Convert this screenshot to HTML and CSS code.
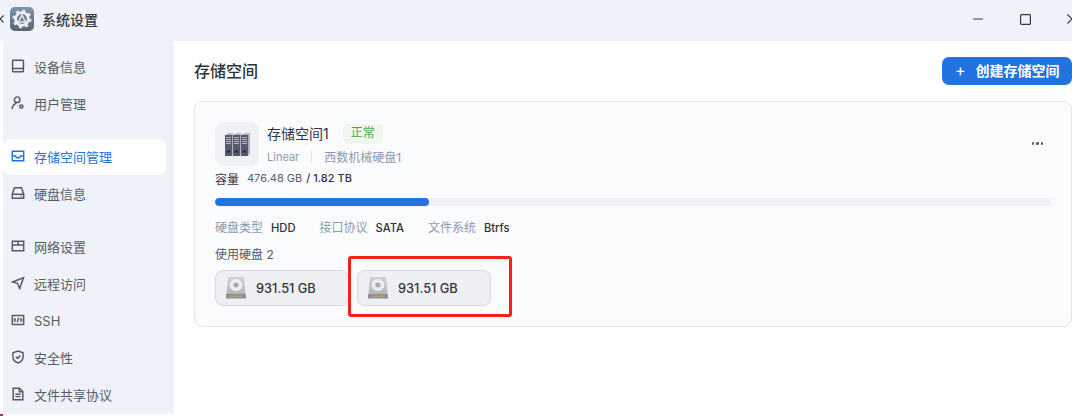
FILE: index.html
```html
<!DOCTYPE html>
<html lang="zh-CN">
<head>
<meta charset="utf-8">
<title>系统设置</title>
<link rel="stylesheet" href="styles.css">
</head>
<body>
<div class="app">
  <header class="titlebar">
    <svg class="back" width="4" height="10" viewBox="0 0 4 10"><path d="M3.500 1.500 0 5 3.500 8.500" fill="none" stroke="#333a45" stroke-width="1.200"/></svg>
    <svg class="app-icon" width="24" height="24" viewBox="0 0 24 24">
      <defs><linearGradient id="ag" x1="0" y1="0" x2="0" y2="1"><stop offset="0" stop-color="#7f93ab"/><stop offset="1" stop-color="#5a6473"/></linearGradient></defs>
      <rect width="24" height="24" rx="5" fill="url(#ag)"/>
      <circle cx="12" cy="12" r="6.400" fill="#6f7f94" stroke="#eceff3" stroke-width="2.800"/>
      <circle cx="12" cy="12" r="8.400" fill="none" stroke="#eceff3" stroke-width="2.200" stroke-dasharray="3 3.600"/>
      <path d="M12 8 15.500 15H8.500Z" fill="none" stroke="#e4e8ed" stroke-width="1.500"/>
    </svg>
    <span class="app-title">系统设置</span>
    <div class="win-controls">
      <svg class="win-min" width="10" height="2" viewBox="0 0 10 2"><rect width="10" height="1.400" y=".3" fill="#6c727c"/></svg>
      <svg width="11" height="11" viewBox="0 0 11 11"><rect x=".6" y=".6" width="9.800" height="9.800" rx="1" fill="none" stroke="#33383f" stroke-width="1.200"/></svg>
      <svg width="10" height="10" viewBox="0 0 10 10"><path d="M.5.500 9.500 9.500M9.500.500.500 9.500" stroke="#33383f" stroke-width="1.200"/></svg>
    </div>
  </header>
  <div class="body-row">
    <div class="edge"></div>
    <nav class="sidebar">
      <a class="nav-item">
        <svg class="nav-icon" viewBox="0 0 16 16"><path d="M2.500 1.500h11a.7.7 0 0 1 .7.7v11.600a.7.7 0 0 1-.7.7h-11a.7.7 0 0 1-.7-.7V2.200a.7.7 0 0 1 .7-.7ZM1.800 10.800h12.400"/></svg>
        <span>设备信息</span>
      </a>
      <a class="nav-item">
        <svg class="nav-icon" viewBox="0 0 16 16"><circle cx="7" cy="4.200" r="3.200"/><path d="M1.200 15.200c.2-3.500 2-6 5-7"/><circle cx="11.800" cy="12" r="1.800" stroke-width="1.800"/></svg>
        <span>用户管理</span>
      </a>
      <a class="nav-item active group-start">
        <svg class="nav-icon" viewBox="0 0 16 16"><path d="M1.500 2.500h13v11h-13ZM1.500 8h3.800l1 2h3.400l1-2h3.800"/></svg>
        <span>存储空间管理</span>
      </a>
      <a class="nav-item">
        <svg class="nav-icon" viewBox="0 0 16 16"><path d="M4 2h8l2.500 7v5H1.500V9ZM1.500 9.300h13M11 11.700h1.200"/></svg>
        <span>硬盘信息</span>
      </a>
      <a class="nav-item group-start">
        <svg class="nav-icon" viewBox="0 0 16 16"><path d="M1.500 2.500h13v11h-13ZM1.500 6.800h13M8 2.500v4.300"/></svg>
        <span>网络设置</span>
      </a>
      <a class="nav-item">
        <svg class="nav-icon" viewBox="0 0 16 16"><path d="M14.300 2 1.500 6.800l6 1.600 2.400 6Z"/></svg>
        <span>远程访问</span>
      </a>
      <a class="nav-item">
        <svg class="nav-icon" viewBox="0 0 16 16"><path d="M1.500 2.800h13v10.400h-13ZM5.200 6 3.700 8l1.500 2M10.800 6l1.500 2-1.500 2M8.800 5.500l-1.600 5"/></svg>
        <span class="latin">SSH</span>
      </a>
      <a class="nav-item">
        <svg class="nav-icon" viewBox="0 0 16 16"><path d="M8 1.200 13.800 3.200V8c0 3.300-2.500 5.500-5.800 6.800C4.700 13.500 2.200 11.300 2.200 8V3.200ZM5.500 7.800 7.400 9.600 10.600 6.400"/></svg>
        <span>安全性</span>
      </a>
      <a class="nav-item">
        <svg class="nav-icon" viewBox="0 0 16 16"><path d="M2.500 1.500h7.300l3.700 3.700v9.300h-11ZM9.500 1.500v4h4M5 8.300h6M5 11h6"/></svg>
        <span>文件共享协议</span>
      </a>
    </nav>
    <main class="main">
      <div class="page-head">
        <h1 class="page-title">存储空间</h1>
        <button class="primary-btn"><span class="plus">+</span>创建存储空间</button>
      </div>
      <section class="card">
        <div class="card-head">
          <div class="pool-icon">
            <svg width="28" height="28" viewBox="0 0 28 28">
              <path d="M3 5 5 3h5.500L9 5Z" fill="#b4b8c4"/><path d="M9 5l1.500-2v20L9 26Z" fill="#aeb2c0"/><rect x="2" y="5" width="7" height="21" fill="#545a6c"/>
              <path d="M3 7.500h5M3 9.500h5M3 11.500h5M3 13.500h5" stroke="#c9ccd6" stroke-width=".8"/><circle cx="5.500" cy="21.500" r="1.300" fill="#20232c"/>
              <path d="M11 5l2-2h5.500L17 5Z" fill="#b4b8c4"/><path d="M17 5l1.500-2v20L17 26Z" fill="#aeb2c0"/><rect x="10" y="5" width="7" height="21" fill="#545a6c"/>
              <path d="M11 7.500h5M11 9.500h5M11 11.500h5M11 13.500h5" stroke="#c9ccd6" stroke-width=".8"/><circle cx="13.500" cy="21.500" r="1.300" fill="#20232c"/>
              <path d="M19 5l2-2h6L25 5Z" fill="#b4b8c4"/><path d="M25 5l2-2v20L25 26Z" fill="#aeb2c0"/><rect x="18" y="5" width="7" height="21" fill="#545a6c"/>
              <path d="M19 7.500h5M19 9.500h5M19 11.500h5M19 13.500h5" stroke="#c9ccd6" stroke-width=".8"/><circle cx="21.500" cy="21.500" r="1.300" fill="#20232c"/>
            </svg>
          </div>
          <div class="pool-info">
            <div class="pool-name-row">
              <span class="pool-name">存储空间1</span>
              <span class="status">正常</span>
            </div>
            <div class="pool-sub"><span class="raid">Linear</span><i class="sub-sep"></i><span>西数机械硬盘1</span></div>
          </div>
          <div class="more"><i></i><i></i><i></i></div>
        </div>
        <div class="capacity"><span class="cap-label">容量</span><span class="cap-used">476.48 GB</span><span class="cap-total">/ 1.82 TB</span></div>
        <div class="progress"><div class="progress-fill" style="width:25.600%"></div></div>
        <div class="specs">
          <div class="spec"><span class="spec-key">硬盘类型</span><span class="spec-val">HDD</span></div>
          <div class="spec"><span class="spec-key">接口协议</span><span class="spec-val">SATA</span></div>
          <div class="spec"><span class="spec-key">文件系统</span><span class="spec-val">Btrfs</span></div>
        </div>
        <div class="disks-label">使用硬盘 2</div>
        <div class="disks">
          <div class="disk">
            <svg class="disk-icon" width="22" height="24" viewBox="0 0 22 24"><defs><linearGradient id="dg" x1="0" y1="0" x2="0" y2="1"><stop offset="0" stop-color="#d2d3d8"/><stop offset="1" stop-color="#b4b6bd"/></linearGradient></defs><path d="M3 1h16l1.500 17h-19Z" fill="url(#dg)"/><ellipse cx="11" cy="9" rx="6.500" ry="6" fill="#eceded"/><ellipse cx="11" cy="9" rx="2.600" ry="2.400" fill="#a6a9b0"/><path d="M1 18h20v4.500H1Z" fill="#8d9098"/><path d="M5 20.500h12" stroke="#c9a94e" stroke-width="1.400" stroke-dasharray="1.500 .8"/></svg>
            <span>931.51 GB</span>
          </div>
          <div class="disk">
            <svg class="disk-icon" width="22" height="24" viewBox="0 0 22 24"><path d="M3 1h16l1.500 17h-19Z" fill="url(#dg)"/><ellipse cx="11" cy="9" rx="6.500" ry="6" fill="#eceded"/><ellipse cx="11" cy="9" rx="2.600" ry="2.400" fill="#a6a9b0"/><path d="M1 18h20v4.500H1Z" fill="#8d9098"/><path d="M5 20.500h12" stroke="#c9a94e" stroke-width="1.400" stroke-dasharray="1.500 .8"/></svg>
            <span>931.51 GB</span>
            <div class="highlight"></div>
          </div>
        </div>
      </section>
    </main>
  </div>
</div>
</body>
</html>
```
FILE: styles.css
```css
* { box-sizing: border-box; }
html, body { margin: 0; height: 100%; }
body {
  width: 1072px;
  height: 416px;
  overflow: hidden;
  background: #fff;
  font-family: "Inter", "Noto Sans CJK SC", sans-serif;
  color: #2b2f36;
}
.app { display: flex; flex-direction: column; height: 416px; }
.titlebar {
  height: 41px;
  flex: none;
  display: flex;
  align-items: center;
  background: #eff3f9;
}
.back { margin: -3px 6px 0 0; flex: none; }
.app-icon { flex: none; margin-top: -3px; }
.app-title {
  margin: -4px 0 0 8px;
  font-size: 14px;
  font-weight: 500;
  color: #33373e;
}
.win-controls {
  margin-left: auto;
  margin-top: -3px;
  display: flex;
  align-items: center;
  gap: 36px;
  margin-right: -5px;
}
.win-min { margin-right: 1px; }
.body-row { flex: 1; display: flex; min-height: 0; }
.edge {
  width: 3px;
  flex: none;
  display: flex;
  align-items: flex-end;
}
.edge::after {
  content: "";
  width: 3px;
  height: 2px;
  background: linear-gradient(90deg, #e33, #33d);
}
.sidebar {
  width: 171px;
  height: 373px;
  flex: none;
  background: #eff3f9;
  padding: 8px 8px 0 0;
  display: flex;
  flex-direction: column;
  gap: 1px;
}
.nav-item {
  height: 36px;
  flex: none;
  display: flex;
  align-items: center;
  gap: 9px;
  padding: 0 0 2px 8px;
  border-radius: 8px;
  font-size: 13px;
  color: #555b64;
}
.group-start { margin-top: 16px; }
.nav-item.active { background: #fff; color: #2473e0; }
.nav-icon {
  width: 14px;
  height: 14px;
  flex: none;
  fill: none;
  stroke: #555b64;
  stroke-width: 1.700;
}
.active .nav-icon { stroke: #2473e0; }
.latin { margin-top: 2px; }
.main {
  flex: 1;
  min-width: 0;
  background: #fff;
  border-top-left-radius: 10px;
  padding: 16px 0 0 20px;
}
.page-head {
  display: flex;
  align-items: center;
  justify-content: space-between;
  height: 28px;
}
.page-title {
  margin: -2px 0 0;
  font-size: 16px;
  font-weight: 500;
  color: #2f333a;
}
.primary-btn {
  width: 130px;
  height: 28px;
  border: 0;
  border-radius: 7px;
  background: #2272e0;
  color: #fff;
  font: 600 14px "Inter", "Noto Sans CJK SC", sans-serif;
  display: flex;
  align-items: center;
  padding: 0 0 2px 13px;
}
.plus { font-size: 16px; font-weight: 400; margin-right: 10px; }
.card {
  margin-top: 16px;
  width: 878px;
  height: 226px;
  background: #fafbfd;
  border: 1px solid #e3e7ee;
  border-radius: 8px;
  padding: 20px 20px 0;
}
.card-head { display: flex; height: 45px; position: relative; }
.pool-icon {
  width: 44px;
  height: 44px;
  flex: none;
  border-radius: 9px;
  background: #f0f1f4;
  display: flex;
  align-items: center;
  justify-content: center;
}
.pool-info { margin-left: 8px; }
.pool-name-row { display: flex; align-items: center; height: 20px; margin-top: 2px; }
.pool-name { font-size: 14px; color: #33373e; margin-top: -2px; }
.status {
  margin-left: 14px;
  width: 40px;
  height: 20px;
  line-height: 18px;
  text-align: center;
  border-radius: 5px;
  background: #eef6ee;
  color: #4aa552;
  font-size: 12px;
}
.pool-sub {
  display: flex;
  align-items: center;
  margin-top: 4px;
  font-size: 12px;
  color: #8c9ab0;
}
.raid { font-size: 11px; }
.sub-sep { width: 1px; height: 12px; background: #e0e4ea; margin: 0 12px; }
.more {
  position: absolute;
  right: 8px;
  top: 20px;
  display: flex;
  gap: 2px;
}
.more i { width: 2.500px; height: 2.500px; border-radius: 50%; background: #565c68; }
.capacity {
  display: flex;
  align-items: center;
  height: 16px;
  margin-top: 3px;
  font-size: 12px;
  color: #33373e;
}
.cap-label { margin-right: 8px; }
.cap-used { color: #5b6069; margin-right: 4px; font-size: 11px; }
.cap-total { color: #33373e; font-size: 11px; font-weight: 500; }
.progress {
  margin-top: 12px;
  height: 8px;
  border-radius: 4px;
  background: #eff1f4;
  overflow: hidden;
}
.progress-fill { height: 100%; border-radius: 4px; background: #2272e0; }
.specs { display: flex; gap: 24px; margin-top: 14px; height: 16px; align-items: center; }
.spec { display: flex; align-items: center; gap: 8px; font-size: 12px; line-height: 16px; }
.spec-key { color: #8c9ab0; }
.spec-val { color: #2f333a; font-weight: 500; font-size: 11.200px; }
.disks-label { margin-top: 11px; height: 16px; line-height: 16px; font-size: 12px; color: #555b64; }
.disks { display: flex; gap: 8px; margin-top: 7px; }
.disk {
  width: 134px;
  height: 36px;
  border: 1px solid #d5dbe4;
  border-radius: 8px;
  background: #eff0f3;
  display: flex;
  align-items: center;
  gap: 9px;
  padding-left: 9px;
  font-size: 12.800px;
  font-weight: 500;
  color: #33373e;
  position: relative;
}
.disk-icon { flex: none; }
.highlight {
  position: absolute;
  left: -10px;
  top: -15px;
  width: 164px;
  height: 61px;
  border: 3px solid #f5221c;
  border-radius: 3px;
  pointer-events: none;
}
```
